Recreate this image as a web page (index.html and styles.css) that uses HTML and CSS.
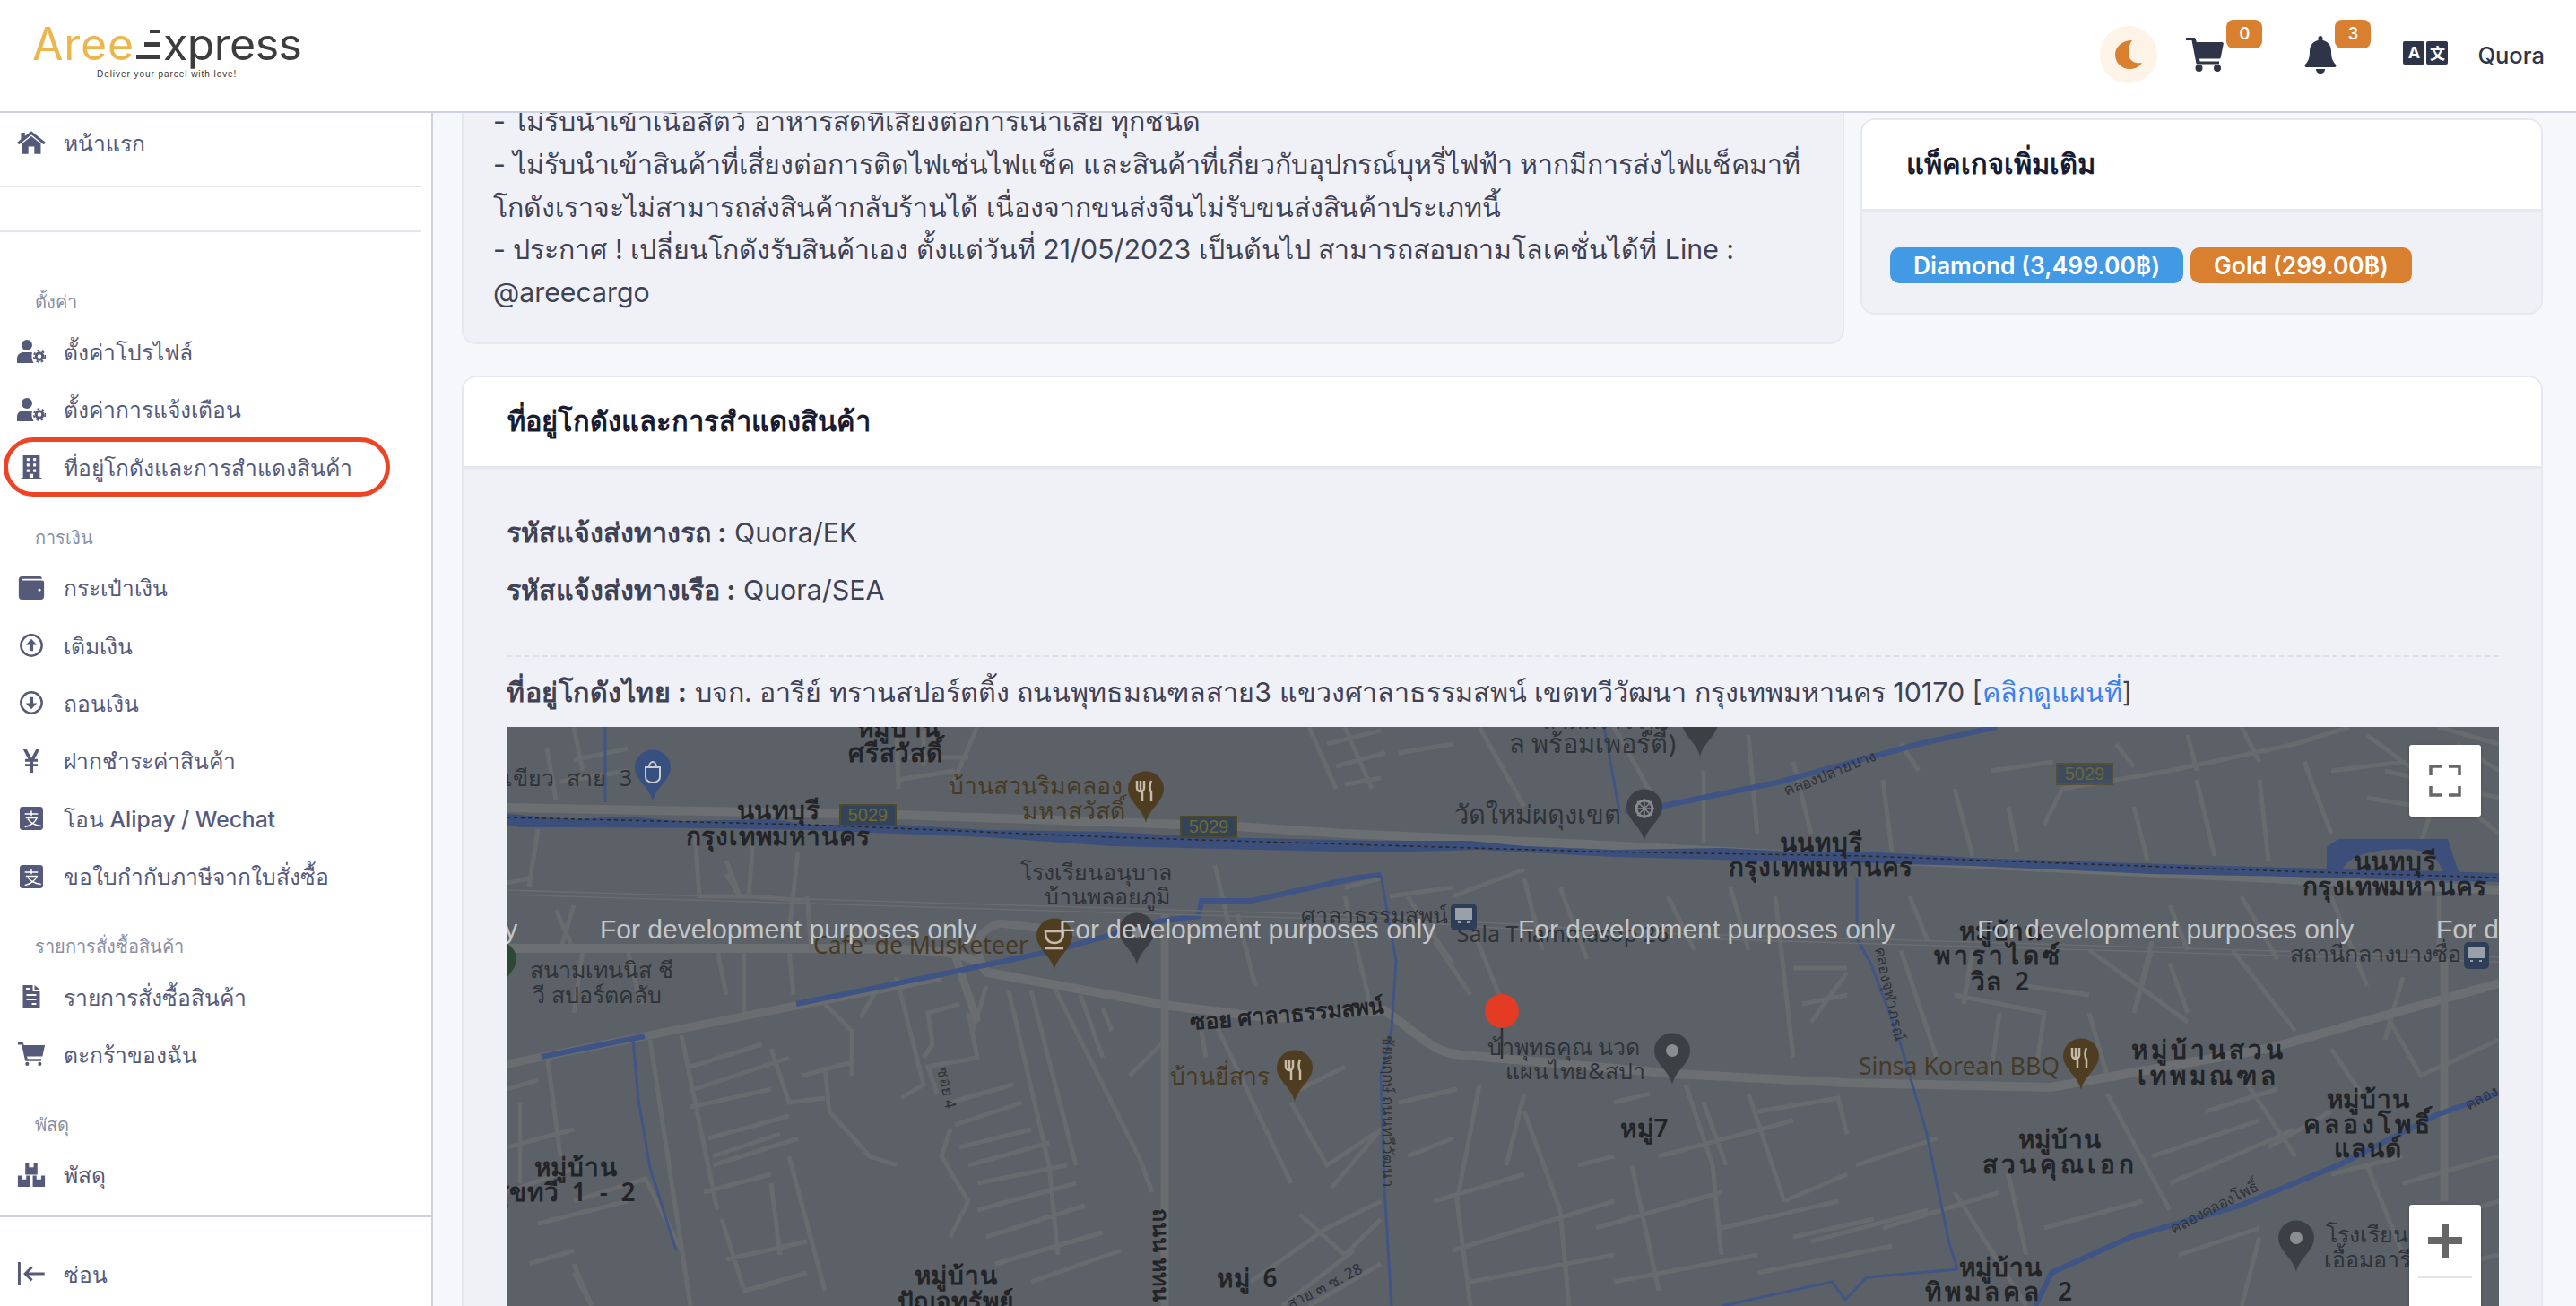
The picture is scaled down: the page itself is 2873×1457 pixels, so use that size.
FILE: index.html
```html
<!DOCTYPE html>
<html lang="th">
<head>
    <meta charset="utf-8">
    <title>AreeExpress</title>
    <link rel="stylesheet" href="styles.css">
</head>
<body>
    <svg class="icon-defs" width="0" height="0">
        <symbol id="i-home" viewBox="0 0 29 23"><path d="M14.5 0L29 11.5l-2 2-12.5-10-12.5 10-2-2L4 8.2V1.5h4V5z"/><path d="M5 12.6l9.5-7.4 9.5 7.4V23h-6.5v-7.5h-6V23H5z"/></symbol>
        <symbol id="i-usercog" viewBox="0 0 32 26"><circle cx="11" cy="6" r="6"/><path d="M0 26v-5c0-4.500 3.500-7 8-7h7c1.500 0 2 .5 2 .5-1.200 3.500-.5 8 1.500 11.500z"/><circle cx="25" cy="18.500" r="3.800" fill="none" stroke="currentColor" stroke-width="3"/><circle cx="25" cy="18.500" r="6.300" fill="none" stroke="currentColor" stroke-width="1.800" stroke-dasharray="2.600 2.700"/></symbol>
        <symbol id="i-building" viewBox="0 0 22 25"><path fill-rule="evenodd" d="M2 0h18v24h2v1H0v-1h2zM6 3v3h3V3zm7 0v3h3V3zM6 9v3h3V9zm7 0v3h3V9zM6 15v3h3v-3zm7 0v3h3v-3zm-4 5v4h4v-4z"/></symbol>
        <symbol id="i-wallet" viewBox="0 0 25 23"><path d="M3 0h18c1.500 0 2 1 2 2.500H4c-1 0-1 1.500 0 1.500h19c1.200 0 2 .8 2 2v14c0 1.700-1.300 3-3 3H3c-1.700 0-3-1.300-3-3V3c0-1.700 1.300-3 3-3z"/><circle cx="20.500" cy="13.500" r="1.300" fill="#fff"/></symbol>
        <symbol id="i-up" viewBox="0 0 25 25"><circle cx="12.500" cy="12.500" r="11.200" fill="none" stroke="currentColor" stroke-width="2.400"/><path d="M12.500 5.500l6 6.500h-4v6.500h-4V12h-4z"/></symbol>
        <symbol id="i-down" viewBox="0 0 25 25"><circle cx="12.500" cy="12.500" r="11.200" fill="none" stroke="currentColor" stroke-width="2.400"/><path d="M12.500 19.500l-6-6.500h4V6.500h4V13h4z"/></symbol>
        <symbol id="i-yen" viewBox="0 0 17 24"><path d="M0 0h3.800L8.500 9 13.200 0H17l-5.200 10H15v2.600h-4.600v2.300H15v2.600h-4.600V24H6.600v-6.500H2v-2.600h4.600v-2.300H2V10h3.200z"/></symbol>
        <symbol id="i-alipay" viewBox="0 0 23 23"><rect width="23" height="23" rx="3"/><path d="M5 7h13M11.500 4v5M6 11h11c-2 5-6 7.500-12 9M8 12c2 3.500 6 6 13 7" fill="none" stroke="#fff" stroke-width="1.300"/></symbol>
        <symbol id="i-file" viewBox="0 0 19 26"><path fill-rule="evenodd" d="M0 0h11v7h8v19H0zM13 0l6 5h-6zM4 10v2h11v-2zm0 5v2h11v-2zm6 5v2h5v-2zM3.500 3v3h5V3z"/></symbol>
        <symbol id="i-cart" viewBox="0 0 29 25"><path d="M0 0h5.500l1 3H29l-2.600 12H9.800l.5 2.500H25V20H8L4 2.500H0z"/><circle cx="10" cy="23" r="2"/><circle cx="23.500" cy="23" r="2"/></symbol>
        <symbol id="i-boxes" viewBox="0 0 29 25"><path d="M8 0h4v4h5V0h4v12H8zM0 13h4v4h5v-4h4v12H0zM16 13h4v4h5v-4h4v12H16z"/></symbol>
        <symbol id="i-hide" viewBox="0 0 27 23"><path d="M1.500 0v23M26.500 11.500H8M14 5l-6.500 6.500L14 18" fill="none" stroke="currentColor" stroke-width="2.600"/></symbol>
        <symbol id="pin" viewBox="-21 -58 42 59" overflow="visible"><path d="M0 0C-3-15-20-24-20-38a20 19.500 0 0 1 40 0C20-24 3-15 0 0z"/></symbol>
    </svg>

    <header class="topbar">
        <a class="logo">
            <div class="logo-word">
                <span class="logo-aree">Aree</span>
                <span class="logo-e"><i class="bar-s"></i><i class="bar-m"></i><i class="bar-l"></i></span>
                <span class="logo-rest">xpress</span>
            </div>
            <div class="logo-tag">Deliver your parcel with love!</div>
        </a>
        <div class="topbar-right">
            <div class="theme-btn">
                <svg width="30" height="32" viewBox="0 0 30 32"><path fill="#d97f30" d="M19 0C8 0 0 7 0 16s7.500 16 16 16c6 0 11-2.500 14-7-8 1.500-15-2-15-11 0-6 1.500-11 4-14z"/></svg>
            </div>
            <div class="top-icon">
                <svg class="cart" width="42" height="38" viewBox="0 0 42 38"><path d="M0 0h9c1 0 1.500.5 1.800 1.500l1 3.500H40c1.300 0 2 .8 1.800 2l-3 15c-.2 1-.8 1.500-1.800 1.500H15l.5 3H37v3H13c-1 0-1.500-.5-1.700-1.500L6.500 3H0z"/><circle cx="14.500" cy="34" r="4"/><circle cx="35" cy="34" r="4"/></svg>
                <span class="badge">0</span>
            </div>
            <div class="top-icon bell-wrap">
                <svg class="bell" width="36" height="42" viewBox="0 0 36 42"><path d="M18 0c1.500 0 2.500 1 2.500 2.500V5C26 6 30 10.500 30 17c0 9 2 11.500 5 15 1 1.500.5 3-1.500 3h-31C.5 35 0 33.500 1 32c3-3.500 5-6 5-15 0-6.500 4-11 9.500-12V2.500C15.500 1 16.500 0 18 0z"/><path d="M13 37h10c0 3-2 5-5 5s-5-2-5-5z"/></svg>
                <span class="badge">3</span>
            </div>
            <div class="lang"><span class="lang-a">A</span><span class="lang-b">文</span></div>
            <div class="user-name">Quora</div>
        </div>
    </header>

    <div class="shell">
        <aside class="sidebar">
            <nav class="nav">
                <a class="nav-item"><svg class="nav-icon"><use href="#i-home"/></svg>หน้าแรก</a>
                <div class="nav-divider"></div>
                <div class="nav-divider second"></div>

                <div class="nav-label first">ตั้งค่า</div>
                <a class="nav-item"><svg class="nav-icon"><use href="#i-usercog"/></svg>ตั้งค่าโปรไฟล์</a>
                <a class="nav-item"><svg class="nav-icon"><use href="#i-usercog"/></svg>ตั้งค่าการแจ้งเตือน</a>
                <a class="nav-item marked"><svg class="nav-icon"><use href="#i-building"/></svg>ที่อยู่โกดังและการสำแดงสินค้า</a>

                <div class="nav-label">การเงิน</div>
                <a class="nav-item"><svg class="nav-icon"><use href="#i-wallet"/></svg>กระเป๋าเงิน</a>
                <a class="nav-item"><svg class="nav-icon"><use href="#i-up"/></svg>เติมเงิน</a>
                <a class="nav-item"><svg class="nav-icon"><use href="#i-down"/></svg>ถอนเงิน</a>
                <a class="nav-item"><svg class="nav-icon"><use href="#i-yen"/></svg>ฝากชำระค่าสินค้า</a>
                <a class="nav-item"><svg class="nav-icon"><use href="#i-alipay"/></svg>โอน Alipay / Wechat</a>
                <a class="nav-item"><svg class="nav-icon"><use href="#i-alipay"/></svg>ขอใบกำกับภาษีจากใบสั่งซื้อ</a>

                <div class="nav-label">รายการสั่งซื้อสินค้า</div>
                <a class="nav-item"><svg class="nav-icon"><use href="#i-file"/></svg>รายการสั่งซื้อสินค้า</a>
                <a class="nav-item"><svg class="nav-icon"><use href="#i-cart"/></svg>ตะกร้าของฉัน</a>

                <div class="nav-label">พัสดุ</div>
                <a class="nav-item"><svg class="nav-icon"><use href="#i-boxes"/></svg>พัสดุ</a>
            </nav>
            <div class="sidebar-foot">
                <a class="nav-item"><svg class="nav-icon"><use href="#i-hide"/></svg>ซ่อน</a>
            </div>
        </aside>

        <main class="main">
            <div class="top-row">
                <section class="card notice-card">
                    <div class="notice-text">
                        - ไม่รับนำเข้าเนื้อสัตว์ อาหารสดที่เสี่ยงต่อการเน่าเสีย ทุกชนิด<br>
                        - ไม่รับนำเข้าสินค้าที่เสี่ยงต่อการติดไฟเช่นไฟแช็ค และสินค้าที่เกี่ยวกับอุปกรณ์บุหรี่ไฟฟ้า หากมีการส่งไฟแช็คมาที่<br>
                        โกดังเราจะไม่สามารถส่งสินค้ากลับร้านได้ เนื่องจากขนส่งจีนไม่รับขนส่งสินค้าประเภทนี้<br>
                        - ประกาศ ! เปลี่ยนโกดังรับสินค้าเอง ตั้งแต่วันที่ 21/05/2023 เป็นต้นไป สามารถสอบถามโลเคชั่นได้ที่ Line :<br>
                        @areecargo
                    </div>
                </section>
                <section class="card package-card">
                    <div class="card-head package-head"><h3>แพ็คเกจเพิ่มเติม</h3></div>
                    <div class="package-body">
                        <span class="chip chip-blue">Diamond (3,499.00฿)</span>
                        <span class="chip chip-orange">Gold (299.00฿)</span>
                    </div>
                </section>
            </div>

            <section class="card address-card">
                <div class="card-head"><h3>ที่อยู่โกดังและการสำแดงสินค้า</h3></div>
                <div class="address-body">
                    <p class="code-line"><b>รหัสแจ้งส่งทางรถ :</b> Quora/EK</p>
                    <p class="code-line"><b>รหัสแจ้งส่งทางเรือ :</b> Quora/SEA</p>
                    <div class="dash-line"></div>
                    <p class="address-line"><b>ที่อยู่โกดังไทย :</b> บจก. อารีย์ ทรานสปอร์ตติ้ง ถนนพุทธมณฑลสาย3 แขวงศาลาธรรมสพน์ เขตทวีวัฒนา กรุงเทพมหานคร 10170 [<a class="map-link">คลิกดูแผนที่</a>]</p>

                    <div class="map">
                        <svg class="map-svg" width="2222" height="646" viewBox="565 811 2222 646">
                            <rect x="565" y="811" width="2222" height="646" fill="#5b6167"/>

                            <!-- small streets -->
                            <path class="road-s" d="M640 811L650 860M610 835L620 892M700 835L640 848M700 860L625 872
                                M1000 811L1002 880M1010 845H1080M1000 870L1065 860M1090 811L1060 880M1030 815V855
                                M1460 811L1490 880M1480 830L1540 815M1490 855L1545 840M1500 875L1540 868
                                M600 925L590 990M590 980L565 985M775 930L780 1000L840 1000L900 1005M810 975L825 1000L810 960M840 935L835 1000
                                M890 950L880 1040M900 1000L905 1060
                                M1355 965L1370 1030M1500 990L1540 980M1380 1020L1400 1100
                                M620 1015L640 1060M640 1010L625 1060M650 1060L640 1130M700 1060L715 1120M800 1060L810 1110M830 1060L830 1130M880 1060L885 1110
                                M920 1120L950 1150L950 1200M980 1100L960 1135M1000 1090L1030 1210L1005 1225
                                M565 1190L620 1175M565 1215L600 1205M610 1175L625 1290M580 1230L580 1320M565 1280L640 1260M565 1330L650 1300
                                M640 1340L720 1315L760 1395M600 1365L700 1340M640 1410L660 1457M590 1410L640 1395
                                M725 1160L770 1457M760 1155L800 1350M770 1190L850 1165M775 1215L880 1180M770 1235L860 1215M790 1270L880 1245M795 1290L870 1265M795 1300L890 1270
                                M785 1330L860 1310M805 1360L830 1440L900 1420M860 1320L870 1400M880 1290L920 1440M810 1405L900 1385M830 1440L870 1430M660 1457L640 1420
                                M860 1170L880 1230L920 1225M895 1200L950 1185M920 1190L925 1240L970 1290L1000 1300
                                M1070 1120L1035 1130L1040 1165L1030 1180M1080 1130L1090 1180L1035 1190L1045 1220M1100 1100L1085 1150
                                M1125 1105L1170 1300L1180 1400M1150 1105L1200 1300M1175 1100L1270 1290L1285 1330M1205 1110L1230 1180
                                M1060 1260L1050 1290L1080 1340L1060 1380M1060 1230L1130 1210M1065 1255L1140 1230M1070 1280L1150 1260M1080 1300L1170 1275M1090 1320L1190 1300M1090 1350L1200 1320M1100 1380L1210 1345M1110 1410L1230 1375M1150 1430L1250 1395
                                M1300 1160L1260 1200M1230 1125L1240 1150M1340 1150L1345 1180M1350 1130L1440 1320M1440 1220L1500 1190M1440 1230L1480 1300L1540 1260L1485 1325M1450 1355L1500 1400L1540 1360M1395 1430L1480 1370L1540 1340M1430 1457L1510 1395M1460 1457L1540 1410
                                M1500 1000L1530 1130M1550 1000L1620 990M1570 1000L1620 1075M1600 1050L1640 1110M1640 1030L1680 1130M1620 1000L1700 970M1700 980L1720 1060M1740 990L1770 1070
                                M1800 811L1850 900M1650 811L1700 900M1560 840L1620 830M1500 811L1530 880M1900 860V940M1950 820L1960 930M2000 850L2020 930M2100 870L2110 950M2180 880L2200 955M2240 900L2250 950
                                M2280 920L2300 880L2420 860L2560 830L2620 811M2380 900L2395 960M2450 870L2470 955M2520 870L2530 960M2570 850L2600 930M2640 820L2720 880L2700 940M2660 860L2787 890M2720 811L2787 830
                                M1650 1210L1625 1340L1640 1457M1700 1220L1680 1300M1560 1230L1625 1215M1570 1290L1620 1270M1600 1340L1700 1310M1620 1395L1800 1340M1640 1430L1800 1400M1700 1240L1740 1350L1750 1457
                                M1880 1210L1910 1300L1920 1400M1800 1230L1840 1220M1850 1290L2000 1250M1950 1220L1990 1340M1990 1340L2060 1310M1920 1370L2050 1340M1960 1240L2050 1225L2060 1265M2070 1300L2160 1270
                                M2060 1085L2020 1140M2120 1060L2160 1180M2180 1110L2280 1130L2270 1200M2230 1130L2220 1200M2330 1060L2440 1140M2400 1050L2380 1130L2400 1060M2440 1130L2420 1075M2490 1060L2560 1150
                                M2350 1220L2420 1350M2400 1290L2520 1250M2420 1320L2560 1260M2500 1200L2560 1290M2600 1170L2640 1230M2660 1130L2700 1200L2787 1160
                                M2240 1310L2260 1400M2280 1370L2390 1340M2100 1370L2230 1330M2020 1385L2150 1350M2180 1330L2260 1457
                                M1860 1000L1890 1060M1930 990L1950 1060M1980 1000L2000 1180M2000 1080H2060M2010 1120L2060 1110M2130 1000L2150 1050M2200 1060L2190 1120M2260 1100L2330 1110M2330 1130L2350 1200M2420 1010L2440 1060M2500 1000L2540 1070M2600 1000L2640 1100M2680 1090L2660 1160M2720 1000V1060
                                M1900 1230L1925 1300M2000 1380L2090 1360M1960 1420L2110 1390M1820 1300L1850 1440M1760 1300L1800 1290M1780 1370L1920 1330M1800 1430L1960 1400
                                M2430 1400L2520 1370M2520 1380L2500 1457M2600 1310L2680 1290M2640 1300L2680 1400M2680 1320L2787 1290M2690 1370L2787 1340M2700 1420L2787 1400M2530 1280L2600 1240M2460 1240L2540 1215
                                M2120 830L2140 860M2220 860L2290 850M2360 830L2380 855M2440 820L2450 860M2500 811L2520 850M2600 860L2680 850M2640 890L2700 900M2740 830L2787 860M2750 900L2787 930"/>

                            <!-- main roads -->
                            <path class="road-l" d="M565 901L1000 909L1379 922L1500 930L1789 943L2060 957L2550 981L2787 993"/>
                            <path class="road-l" d="M565 1058H905C1050 1058 1085 1060 1101 1085L1305 1122L1420 1136L1544 1127C1590 1160 1600 1175 1631 1177L1868 1198L2060 1208L2288 1213L2533 1169L2726 1114L2787 1097"/>
                            <path class="road-m" d="M565 1187L719 1156L888 1122L1050 1090M1299 1020V1457M2726 1070V1340"/>
                            <path class="road-m" d="M1101 1085C1085 1060 1085 1040 1115 1030L1200 1040M1060 1050L1090 1140"/>

                            <!-- water -->
                            <path class="water-pond" d="M565 908L640 914L700 911L760 916L860 914L905 920L1000 920L1100 926L1240 928L1350 934L1540 938L1640 938L1700 944L1800 948L1920 946L2000 950L2080 950L2200 957L2350 962L2550 968L2650 970L2787 974V984L2550 978L2400 975L2200 966L2080 963L1950 960L1800 956L1650 948L1540 951L1400 948L1240 944L1100 934L1000 930L905 926L800 924L640 923L580 923L565 920z"/>
                            <path class="water-s" d="M675 811V895M1789 811L1806 905M1540 976L1557 1072L1552 1148L1540 1200L1544 1324L1552 1457"/>
                            <path class="water-m" d="M1812 905L1850 900L1982 873L2144 829L2227 811"/>
                            <path class="water-m" d="M604 1179L719 1156M888 1120L1050 1087L1178 1060L1293 1028L1337 1022L1340 1005L1395 1005L1509 980L1540 976"/>
                            <path class="water-s" d="M2071 980V1047L2087 1076L2117 1156L2148 1261L2174 1387L2183 1416M706 1160L712 1227L725 1303L754 1395"/>
                            <path class="water-m" d="M2787 1219L2717 1244L2612 1298L2498 1345L2376 1380L2288 1420L2270 1457"/>
                            <path class="water-s" d="M1920 1457L2043 1430L2058 1450L2082 1425L2183 1416"/>
                            <path class="water-pond" d="M2595 945L2608 936H2730L2743 976H2725C2720 950 2700 945 2660 948C2630 952 2615 960 2612 972H2595z"/>

                            <path class="rail" d="M565 993L1540 1022L1850 1041L2787 1068M565 998L1540 1027L1850 1046L2787 1073"/>
                            <path class="rail-dash" d="M565 912L900 920L1240 934L1540 943L1780 950L2080 955L2550 972L2787 979"/>

                            <!-- route shields -->
                            <g class="shield"><rect x="937" y="898" width="62" height="23"/><text x="968" y="916">5029</text></g>
                            <g class="shield"><rect x="1317" y="911" width="62" height="23"/><text x="1348" y="929">5029</text></g>
                            <g class="shield dim"><rect x="2294" y="852" width="62" height="23"/><text x="2325" y="870">5029</text></g>

                            <!-- labels -->
                            <text class="lb" x="1002" y="822">หมู่บ้าน</text>
                            <text class="lb" x="999" y="850">ศรีสวัสดิ์</text>
                            <text class="lg wide" x="634" y="877">เขียว สาย 3</text>
                            <text class="lbr" x="1155" y="886">บ้านสวนริมคลอง</text>
                            <text class="lbr" x="1197" y="914">มหาสวัสดิ์</text>
                            <text class="lb" x="868" y="914">นนทบุรี</text>
                            <text class="lb" x="868" y="943">กรุงเทพมหานคร</text>
                            <text class="lg" x="1222" y="982">โรงเรียนอนุบาล</text>
                            <text class="lg" x="1235" y="1009">บ้านพลอยภูมิ</text>
                            <text class="lg" x="1533" y="1030">ศาลาธรรมสพน์</text>
                            <text class="lbr" x="1027" y="1064">Cafe' de Musketeer</text>
                            <text class="lg" x="671" y="1091">สนามเทนนิส ชี</text>
                            <text class="lg" x="666" y="1119">วี สปอร์ตคลับ</text>
                            <text class="lb tight" transform="translate(1436 1140) rotate(-5)">ซอย ศาลาธรรมสพน์</text>
                            <text class="lbr" x="1360" y="1210">บ้านยี่สาร</text>
                            <text class="ls" transform="translate(1050 1215) rotate(78)">ซอย 4</text>
                            <text class="lb" x="642" y="1312">หมู่บ้าน</text>
                            <text class="lb" x="630" y="1340">สุขทวี 1 - 2</text>
                            <text class="lb" x="1066" y="1433">หมู่บ้าน</text>
                            <text class="lb" x="1066" y="1462">ปัญจทรัพย์</text>
                            <text class="lb" x="1391" y="1436">หมู่ 6</text>
                            <text class="lb tight" transform="translate(1286 1400) rotate(90)">ถนน หทน</text>
                            <text class="ls" transform="translate(1480 1440) rotate(-27)">สาย ๓ ซ. 28</text>
                            <text class="lg big" x="1776" y="840">ล พร้อมเพอร์ตี้)</text>
                            <text class="lg" x="1790" y="813">ลาดพร้าว ภูมิ</text>
                            <text class="ls" transform="translate(2043 868) rotate(-22)">คลองปลายบาง</text>
                            <text class="lg big" x="1715" y="919">วัดใหม่ผดุงเขต</text>
                            <text class="lb" x="2031" y="950">นนทบุรี</text>
                            <text class="lb" x="2031" y="977">กรุงเทพมหานคร</text>
                            <text class="lb" x="2671" y="971">นนทบุรี</text>
                            <text class="lb" x="2671" y="999">กรุงเทพมหานคร</text>
                            <text class="lg" x="1743" y="1051">Sala Thammasop 26</text>
                            <text class="lb" x="2231" y="1049">หมู่บ้าน</text>
                            <text class="lb sp" x="2229" y="1076">พาราไดซ์</text>
                            <text class="lb" x="2231" y="1105">วิล 2</text>
                            <text class="lg" x="2649" y="1073">สถานีกลางบางซื่อ</text>
                            <text class="ls" transform="translate(2102 1110) rotate(78)">คลองจุฬาภรณ์</text>
                            <text class="ls" transform="translate(1542 1240) rotate(90)">ชัยพฤกษ์ ถนนทวีวัฒนา</text>
                            <text class="lg" x="1744" y="1177">บ้าพุทธคุณ นวด</text>
                            <text class="lg" x="1757" y="1204">แผนไทย&amp;สปา</text>
                            <text class="lbr" x="2185" y="1199">Sinsa Korean BBQ</text>
                            <text class="lb sp" x="2463" y="1181">หมู่บ้านสวน</text>
                            <text class="lb sp" x="2463" y="1210">เทพมณฑล</text>
                            <text class="lb" x="1834" y="1269">หมู่7</text>
                            <text class="lb" x="2297" y="1281">หมู่บ้าน</text>
                            <text class="lb sp" x="2297" y="1309">สวนคุณเอก</text>
                            <text class="lb" x="2641" y="1236">หมู่บ้าน</text>
                            <text class="lb sp" x="2641" y="1264">คลองโพธิ์</text>
                            <text class="lb" x="2641" y="1291">แลนด์</text>
                            <text class="ls" transform="translate(2472 1352) rotate(-27)">คลองคลองโพธิ์</text>
                            <text class="ls" transform="translate(2770 1230) rotate(-27)">คลอง</text>
                            <text class="lg" x="2640" y="1386">โรงเรียน</text>
                            <text class="lg" x="2640" y="1414">เอื้อมอารี</text>
                            <text class="lb" x="2231" y="1424">หมู่บ้าน</text>
                            <text class="lb sp" x="2231" y="1451">ทิพมลคล 2</text>

                            <!-- place pins -->
                            <use class="pin-blue" href="#pin" x="707" y="836" width="42" height="59"/>
                            <path d="M720 856h16v11a8 6 0 0 1-16 0zM724 856c0-8 8-8 8 0" fill="none" stroke="#c9ccd0" stroke-width="2"/>
                            <use class="pin-brown" href="#pin" x="1257" y="860" width="42" height="59"/>
                            <path class="pin-mark" d="M1272 871v10a2 2 0 0 0 2 2v11M1284 871c-2 4-2 10 0 13v10M1268 871v8a4 4 0 0 0 8 0v-8"/>
                            <use class="pin-brown" href="#pin" x="1155" y="1024" width="42" height="59"/>
                            <path class="pin-mark" d="M1166 1039h20c0 9-3 13-10 13s-10-4-10-13zM1166 1058h20"/>
                            <use class="pin-grey" href="#pin" x="1247" y="1018" width="42" height="59"/>
                            <circle cx="1268" cy="1040" r="6" fill="#7d8085"/>
                            <use class="pin-green" href="#pin" x="535" y="1050" width="42" height="59"/>
                            <use class="pin-brown" href="#pin" x="1423" y="1171" width="42" height="59"/>
                            <path class="pin-mark" d="M1438 1182v10a2 2 0 0 0 2 2v11M1450 1182c-2 4-2 10 0 13v10M1434 1182v8a4 4 0 0 0 8 0v-8"/>
                            <use class="pin-grey" href="#pin" x="1875" y="786" width="42" height="59"/>
                            <use class="pin-grey" href="#pin" x="1813" y="880" width="42" height="59"/>
                            <circle cx="1834" cy="902" r="9" fill="none" stroke="#85888c" stroke-width="3"/>
                            <path d="M1834 891v22M1823 902h22M1826 894l16 16M1842 894l-16 16" stroke="#85888c" stroke-width="1.500"/>
                            <use class="pin-grey" href="#pin" x="1844" y="1152" width="42" height="59"/>
                            <circle cx="1865" cy="1172" r="7" fill="#8a8d91"/>
                            <use class="pin-brown" href="#pin" x="2300" y="1158" width="42" height="59"/>
                            <path class="pin-mark" d="M2315 1169v10a2 2 0 0 0 2 2v11M2327 1169c-2 4-2 10 0 13v10M2311 1169v8a4 4 0 0 0 8 0v-8"/>
                            <use class="pin-grey" href="#pin" x="2540" y="1361" width="42" height="59"/>
                            <circle cx="2561" cy="1381" r="7" fill="#8a8d91"/>

                            <!-- transit stops -->
                            <g class="bus"><rect x="1618" y="1008" width="29" height="30" rx="5"/><path d="M1624 1014h17v11h-17zM1626 1029h3M1636 1029h3"/></g>
                            <g class="bus"><rect x="2748" y="1051" width="28" height="30" rx="5"/><path d="M2753 1057h17v11h-17zM2755 1072h3M2765 1072h3"/></g>

                            <!-- dev watermark -->
                            <text class="watermark" x="157" y="1047">For development purposes only</text>
                            <text class="watermark" x="669" y="1047">For development purposes only</text>
                            <text class="watermark" x="1181" y="1047">For development purposes only</text>
                            <text class="watermark" x="1693" y="1047">For development purposes only</text>
                            <text class="watermark" x="2205" y="1047">For development purposes only</text>
                            <text class="watermark" x="2717" y="1047">For development purposes only</text>

                            <!-- red marker -->
                            <path d="M1675 1140V1181" stroke="#2e3033" stroke-width="2.500"/>
                            <ellipse cx="1675" cy="1128" rx="19" ry="19" fill="#e43b24"/>
                        </svg>

                        <button class="map-btn full-btn">
                            <svg width="36" height="36" viewBox="0 0 36 36"><path d="M2 12V2h12M22 2h12v10M34 24v10H22M14 34H2V24" fill="none" stroke="#666" stroke-width="3.500"/></svg>
                        </button>
                        <div class="map-btn zoom-btn">
                            <span class="plus"></span>
                            <span class="zoom-sep"></span>
                        </div>
                    </div>
                </div>
            </section>
        </main>
    </div>
</body>
</html>
```

FILE: styles.css
```css
* {
    box-sizing: border-box;
}

html, body {
    margin: 0;
    height: 100%;
    overflow: hidden;
}

body {
    font-family: Inter, "Noto Sans", sans-serif;
    background: #f5f7fb;
    color: #3f4254;
}

.icon-defs {
    position: absolute;
}

/* Top bar */
.topbar {
    height: 126px;
    background: #fff;
    border-bottom: 2px solid #ced2e0;
    display: flex;
    align-items: flex-start;
    justify-content: space-between;
    padding-left: 36px;
}

.logo {
    display: block;
    margin-top: 20px;
}

.logo-word {
    display: flex;
    align-items: baseline;
    font-family: Inter, sans-serif;
    font-size: 50px;
    line-height: 58px;
    height: 58px;
    letter-spacing: 0.8px;
}

.logo-aree {
    color: #edb64d;
}

.logo-rest {
    color: #3d3d3d;
    letter-spacing: -0.6px;
}

.logo-e {
    align-self: flex-end;
    display: flex;
    flex-direction: column;
    align-items: flex-end;
    justify-content: space-between;
    width: 26px;
    height: 33px;
    margin: 0 4px 12px 2px;
}

.logo-e i {
    display: block;
    background: #3d3d3d;
    height: 5px;
}

.logo-e .bar-s { width: 11px; height: 4px; }
.logo-e .bar-m { width: 17px; }
.logo-e .bar-l { width: 26px; }

.logo-tag {
    font-family: "Liberation Sans", sans-serif;
    font-size: 10px;
    letter-spacing: 0.95px;
    color: #333;
    margin: -1px 0 0 72px;
}

.topbar-right {
    display: flex;
    align-items: flex-start;
    padding-right: 35px;
    color: #2f3549;
}

.theme-btn {
    width: 64px;
    height: 64px;
    margin-top: 29px;
    border-radius: 50%;
    background: #fdf3e7;
    display: flex;
    align-items: center;
    justify-content: center;
}

.top-icon {
    position: relative;
    margin: 42px 0 0 32px;
    height: 42px;
}

.top-icon svg {
    display: block;
    fill: #2f3549;
}

.bell-wrap {
    margin: 40px 0 0 90px;
}

.badge {
    position: absolute;
    top: -20px;
    left: 45px;
    width: 40px;
    height: 32px;
    border-radius: 8px;
    background: #d97f30;
    color: #fff;
    font-size: 18px;
    font-weight: 600;
    line-height: 32px;
    text-align: center;
}

.bell-wrap .badge {
    top: -18px;
    left: 34px;
}

.lang {
    display: flex;
    gap: 2px;
    margin: 46px 0 0 74px;
}

.lang span {
    width: 24px;
    height: 26px;
    background: #2f3549;
    color: #fff;
    border-radius: 2px;
    font-size: 18px;
    font-weight: 700;
    line-height: 26px;
    text-align: center;
}

.lang .lang-b {
    font-family: "Noto Sans CJK SC", sans-serif;
    font-size: 17px;
}

.user-name {
    margin: 45px 0 0 33px;
    font-size: 25.5px;
    font-weight: 500;
    line-height: 34px;
}

/* Shell */
.shell {
    display: flex;
    height: calc(100vh - 126px);
}

.sidebar {
    width: 483px;
    flex: none;
    background: #fff;
    border-right: 2px solid #ced2e0;
    display: flex;
    flex-direction: column;
}

.nav {
    flex: 1;
    padding-top: 2px;
}

.nav-item {
    display: flex;
    align-items: center;
    position: relative;
    height: 64.4px;
    padding-left: 71px;
    font-size: 24.6px;
    font-weight: 500;
    color: #565a7a;
    white-space: nowrap;
}

.nav-icon {
    position: absolute;
    left: 19px;
    top: 18px;
    width: 32px;
    height: 26px;
    fill: currentColor;
}

.nav-item.marked::after {
    content: "";
    position: absolute;
    left: 4px;
    top: -2px;
    width: 421px;
    height: 56px;
    border: 5px solid #ee4426;
    border-radius: 33px;
}

.nav-divider {
    height: 2px;
    width: 469px;
    background: #e4e4ec;
    margin-top: 15px;
}

.nav-divider.second {
    margin-top: 48px;
}

.nav-label {
    height: 24px;
    line-height: 24px;
    margin: 33px 0 13px 39px;
    font-size: 20px;
    color: #8a8ea6;
}

.nav-label.first {
    margin-top: 66px;
    margin-bottom: 12px;
}

.sidebar-foot {
    height: 101px;
    border-top: 2px solid #ced2e0;
    padding-top: 32px;
}

/* Main column */
.main {
    flex: 1;
    padding: 0 37px 0 32px;
    overflow: hidden;
}

.top-row {
    display: flex;
    align-items: flex-start;
    gap: 18px;
    margin-bottom: 35px;
}

.card {
    background: #f0f1f6;
    border: 2px solid #e6e8ef;
    border-radius: 16px;
    overflow: hidden;
}

.card-head {
    height: 102px;
    padding-left: 49px;
    background: #fff;
    border-bottom: 3px solid #e6e8ef;
    display: flex;
    align-items: center;
}

.card-head h3 {
    margin: 0;
    font-size: 30.8px;
    font-weight: 700;
    color: #181c32;
}

.notice-card {
    width: 1542px;
    border-top: 0;
    border-radius: 0 0 16px 16px;
    padding: 0 33px 31px;
}

.notice-text {
    margin-top: -14px;
    font-size: 30.3px;
    line-height: 47.8px;
    white-space: nowrap;
}

.package-card {
    width: 761px;
    margin-top: 6px;
}

.package-body {
    height: 113px;
    padding: 40px 0 0 31px;
    display: flex;
    gap: 8px;
    align-items: flex-start;
}

.chip {
    height: 40px;
    padding: 0 26px;
    border-radius: 10px;
    color: #fff;
    font-size: 26.4px;
    font-weight: 600;
    line-height: 40px;
    white-space: nowrap;
}

.chip-blue {
    background: #4299e4;
}

.chip-orange {
    background: #d97f30;
}

.address-card {
    border-bottom: 0;
    border-radius: 16px 16px 0 0;
}

.address-body {
    padding: 39px 47px 0 48px;
    height: 940px;
}

.address-body p {
    margin: 0;
    font-size: 30.4px;
    white-space: nowrap;
}

.address-body b {
    font-weight: 700;
}

.code-line {
    line-height: 64px;
}

.dash-line {
    margin-top: 41px;
    border-top: 2px dashed #dcdfe6;
}

.address-line {
    line-height: 78px;
}

.address-line b {
    letter-spacing: 0.5px;
}

.map-link {
    color: #3b7ff0;
}

/* Map */
.map {
    position: relative;
    width: 2222px;
    height: 646px;
    overflow: hidden;
}

.map-svg {
    display: block;
    font-family: "Noto Sans", Inter, sans-serif;
}

.map-svg text {
    text-anchor: middle;
    font-size: 24px;
}

.road-s, .road-m, .road-l, .rail, .rail-dash, .water-s, .water-m {
    fill: none;
}

.road-s {
    stroke: #686b6e;
    stroke-width: 5;
}

.road-m {
    stroke: #6a6d70;
    stroke-width: 9;
}

.road-l {
    stroke: #6c6f72;
    stroke-width: 10;
}

.rail {
    stroke: #6a6d70;
    stroke-width: 1.5;
}

.rail-dash {
    stroke: #25272b;
    stroke-width: 1.5;
    stroke-dasharray: 4 4;
}

.water-s {
    stroke: #415584;
    stroke-width: 3;
}

.water-m {
    stroke: #3f5484;
    stroke-width: 6;
}

.water-pond {
    fill: #3c4f7b;
}

.shield rect {
    fill: #33435a;
    stroke: #4f4a25;
    stroke-width: 2;
}

.map-svg .shield text {
    font-family: "Liberation Sans", sans-serif;
    font-size: 20px;
    fill: #6f6a2e;
}

.map-svg .dim {
    opacity: 0.7;
}

.map-svg .lb {
    fill: #222428;
    font-weight: 600;
    font-size: 28px;
    letter-spacing: 0.8px;
    word-spacing: 6px;
}

.map-svg .sp {
    letter-spacing: 4px;
}

.map-svg .tight {
    font-size: 25px;
    letter-spacing: 0;
    word-spacing: 0;
}

.map-svg .lg {
    fill: #2f3337;
    font-size: 25px;
}

.map-svg .big {
    font-size: 29px;
}

.map-svg .wide {
    word-spacing: 8px;
}

.map-svg .lbr {
    fill: #473a24;
    font-size: 26.6px;
}

.map-svg .ls {
    fill: #2f3338;
    font-size: 17px;
}

.pin-blue { fill: #38507f; }
.pin-brown { fill: #4f3d22; }
.pin-grey { fill: #3c4044; }
.pin-green { fill: #2c4a33; }

.pin-mark {
    fill: none;
    stroke: #c5bba8;
    stroke-width: 2.5;
}

.bus rect {
    fill: #2e3d58;
}

.bus path {
    fill: #9aa0a8;
    stroke: #9aa0a8;
    stroke-width: 2;
}

.map-svg .watermark {
    font-family: "Liberation Sans", sans-serif;
    text-anchor: start;
    font-size: 30px;
    fill: #c3c5c7;
}

.map-btn {
    position: absolute;
    left: 2122px;
    width: 80px;
    background: #fff;
    border: 0;
    border-radius: 3px;
    padding: 0;
    box-shadow: 0 1px 3px rgba(0, 0, 0, 0.3);
}

.full-btn {
    top: 20px;
    height: 80px;
    display: flex;
    align-items: center;
    justify-content: center;
}

.zoom-btn {
    top: 533px;
    height: 160px;
}

.plus {
    position: absolute;
    left: 21px;
    top: 21px;
    width: 38px;
    height: 38px;
    background:
        linear-gradient(#666, #666) center / 38px 8px no-repeat,
        linear-gradient(#666, #666) center / 8px 38px no-repeat;
}

.zoom-sep {
    position: absolute;
    left: 10px;
    top: 80px;
    width: 60px;
    height: 2px;
    background: #e6e6e6;
}
```
